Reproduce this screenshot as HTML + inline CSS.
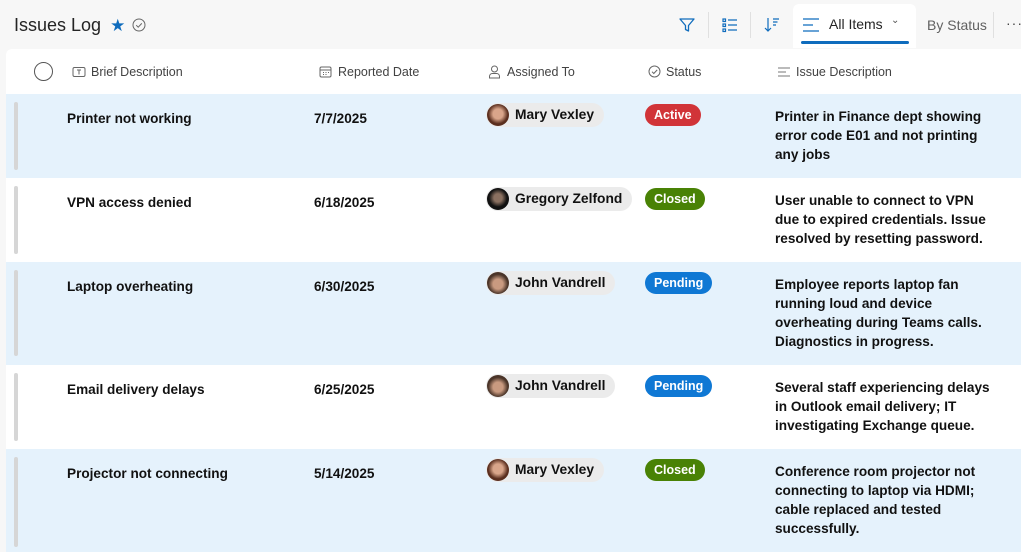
<!DOCTYPE html>
<html><head><meta charset="utf-8"><style>
*{margin:0;padding:0;box-sizing:border-box}
body{width:1021px;height:552px;background:#f7f7f7;font-family:"Liberation Sans",sans-serif;position:relative;overflow:hidden;color:#111}
.a{position:absolute}
.title{left:14px;top:15px;font-size:18px;color:#242424}
.card{left:6px;top:49px;width:1015px;height:503px;background:#fff;border-radius:6px 0 0 0}
.hd{font-size:12.5px;color:#424242;top:65px}
.row{position:absolute;left:6px;width:1015px}
.blue{background:#e5f2fc}
.bar{position:absolute;left:8px;width:4px;background:#d6d6d6;border-radius:2px}
.t{position:absolute;font-weight:bold;font-size:13.6px;color:#111}
.pill{position:absolute;left:480px;height:24px;background:#ebebeb;border-radius:12px;font-weight:bold;font-size:13.8px;line-height:24px;padding:0 10px 0 29px}
.av{position:absolute;left:1px;top:1px;width:22px;height:22px;border-radius:50%}
.st{position:absolute;left:639px;height:22px;border-radius:11px;color:#fff;font-weight:bold;font-size:12.5px;line-height:22px;padding:0 9px}
.d{position:absolute;left:769px;font-weight:bold;font-size:13.6px;line-height:19px}
</style></head><body>
<div class="a title">Issues Log <span style="color:#0f6cbd;font-size:17px;margin-left:4px">★</span>
<svg width="14" height="14" viewBox="0 0 14 14" style="margin-left:2px;vertical-align:-1px"><circle cx="7" cy="7" r="6" fill="none" stroke="#666" stroke-width="1"/><path d="M4.2 7.2l2 2 3.6-3.8" fill="none" stroke="#666" stroke-width="1"/></svg></div>
<svg class="a" style="left:678px;top:16px" width="18" height="18" viewBox="0 0 18 18"><path d="M2 3h14l-5.5 6.5v5.5l-3-1.5v-4z" fill="none" stroke="#0f6cbd" stroke-width="1.3" stroke-linejoin="round"/></svg>
<div class="a" style="left:708px;top:12px;width:1px;height:26px;background:#e0e0e0"></div>
<svg class="a" style="left:721px;top:16px" width="18" height="18" viewBox="0 0 18 18" fill="none" stroke="#0f6cbd" stroke-width="1.2"><rect x="2" y="3" width="2.5" height="2.5"/><rect x="2" y="8" width="2.5" height="2.5"/><rect x="2" y="13" width="2.5" height="2.5"/><path d="M7 4h9M7 9h9M7 14h9"/></svg>
<div class="a" style="left:750px;top:12px;width:1px;height:26px;background:#e0e0e0"></div>
<svg class="a" style="left:763px;top:16px" width="18" height="18" viewBox="0 0 18 18" fill="none" stroke="#0f6cbd" stroke-width="1.2"><path d="M5 2v13M2 12l3 3 3-3M10 3h6M10 6h4.5M10 9h3"/></svg>
<div class="a" style="left:793px;top:4px;width:123px;height:44px;background:#fff;border-radius:6px 6px 0 0"></div>
<svg class="a" style="left:802px;top:17px" width="18" height="16" viewBox="0 0 18 16" stroke="#0f6cbd" stroke-width="1.3"><path d="M1 2h16M1 8h10M1 14h16"/></svg>
<div class="a" style="left:829px;top:16px;font-size:14px;color:#242424">All Items</div>
<div class="a" style="left:891px;top:15px;font-size:10px;color:#555">⌄</div>
<div class="a" style="left:801px;top:41px;width:108px;height:3px;background:#0f6cbd;border-radius:2px"></div>
<div class="a" style="left:927px;top:17px;font-size:14px;color:#616161">By Status</div>
<div class="a" style="left:993px;top:12px;width:1px;height:26px;background:#e0e0e0"></div>
<div class="a" style="left:1006px;top:15px;font-size:14px;color:#444;letter-spacing:1px">···</div>
<div class="a card"></div>
<div class="a" style="left:34px;top:62px;width:19px;height:19px;border:1.3px solid #555;border-radius:50%"></div>
<svg class="a" style="left:72px;top:66px" width="14" height="12" viewBox="0 0 14 12" fill="none" stroke="#666"><rect x="1" y="1.5" width="12" height="9" rx="1.5"/><path d="M5 4h4M7 4v4.5"/></svg>
<div class="a hd" style="left:91px">Brief Description</div>
<svg class="a" style="left:319px;top:66px" width="13" height="12" viewBox="0 0 13 12" fill="none" stroke="#666"><rect x="1" y="1" width="11" height="10" rx="1.5"/><path d="M1 4h11M4 6.5h1M6.5 6.5h1M9 6.5h1M4 8.5h1M6.5 8.5h1"/></svg>
<div class="a hd" style="left:338px">Reported Date</div>
<svg class="a" style="left:488px;top:65px" width="13" height="14" viewBox="0 0 13 14" fill="none" stroke="#666"><circle cx="6.5" cy="4" r="3"/><path d="M1.5 13v-1.5c0-2 1.5-3 3-3h4c1.5 0 3 1 3 3V13z"/></svg>
<div class="a hd" style="left:507px">Assigned To</div>
<svg class="a" style="left:648px;top:65px" width="13" height="13" viewBox="0 0 13 13" fill="none" stroke="#666"><circle cx="6.5" cy="6.5" r="5.5"/><path d="M4 6.7l1.8 1.8 3.4-3.6"/></svg>
<div class="a hd" style="left:666px">Status</div>
<svg class="a" style="left:777px;top:66px" width="14" height="12" viewBox="0 0 14 12" stroke="#777"><path d="M1 2h12M1 6h8M1 10h12"/></svg>
<div class="a hd" style="left:796px">Issue Description</div>

<div class="row blue" style="top:94px;height:84px"><div class="bar" style="top:8px;height:68px"></div>
<div class="t" style="left:61px;top:17px">Printer not working</div><div class="t" style="left:308px;top:17px">7/7/2025</div>
<div class="pill" style="top:9px"><div class="av" style="background:radial-gradient(circle at 50% 45%,#d9a58a 30%,#5a2e1e 60%)"></div>Mary Vexley</div>
<div class="st" style="top:10px;background:#d13438">Active</div>
<div class="d" style="top:13px">Printer in Finance dept showing<br>error code E01 and not printing<br>any jobs</div></div>

<div class="row" style="top:178px;height:84px;background:#fff"><div class="bar" style="top:8px;height:68px"></div>
<div class="t" style="left:61px;top:17px">VPN access denied</div><div class="t" style="left:308px;top:17px">6/18/2025</div>
<div class="pill" style="top:9px"><div class="av" style="background:radial-gradient(circle at 50% 45%,#8a7060 25%,#111 55%)"></div>Gregory Zelfond</div>
<div class="st" style="top:10px;background:#498205">Closed</div>
<div class="d" style="top:13px">User unable to connect to VPN<br>due to expired credentials. Issue<br>resolved by resetting password.</div></div>

<div class="row blue" style="top:262px;height:103px"><div class="bar" style="top:8px;height:86px"></div>
<div class="t" style="left:61px;top:17px">Laptop overheating</div><div class="t" style="left:308px;top:17px">6/30/2025</div>
<div class="pill" style="top:9px"><div class="av" style="background:radial-gradient(circle at 50% 55%,#c99a80 30%,#4a3428 60%)"></div>John Vandrell</div>
<div class="st" style="top:10px;background:#0f78d4">Pending</div>
<div class="d" style="top:13px">Employee reports laptop fan<br>running loud and device<br>overheating during Teams calls.<br>Diagnostics in progress.</div></div>

<div class="row" style="top:365px;height:84px;background:#fff"><div class="bar" style="top:8px;height:68px"></div>
<div class="t" style="left:61px;top:17px">Email delivery delays</div><div class="t" style="left:308px;top:17px">6/25/2025</div>
<div class="pill" style="top:9px"><div class="av" style="background:radial-gradient(circle at 50% 55%,#c99a80 30%,#4a3428 60%)"></div>John Vandrell</div>
<div class="st" style="top:10px;background:#0f78d4">Pending</div>
<div class="d" style="top:13px">Several staff experiencing delays<br>in Outlook email delivery; IT<br>investigating Exchange queue.</div></div>

<div class="row blue" style="top:449px;height:103px"><div class="bar" style="top:8px;height:90px"></div>
<div class="t" style="left:61px;top:17px">Projector not connecting</div><div class="t" style="left:308px;top:17px">5/14/2025</div>
<div class="pill" style="top:9px"><div class="av" style="background:radial-gradient(circle at 50% 45%,#d9a58a 30%,#5a2e1e 60%)"></div>Mary Vexley</div>
<div class="st" style="top:10px;background:#498205">Closed</div>
<div class="d" style="top:13px">Conference room projector not<br>connecting to laptop via HDMI;<br>cable replaced and tested<br>successfully.</div></div>
</body></html>
